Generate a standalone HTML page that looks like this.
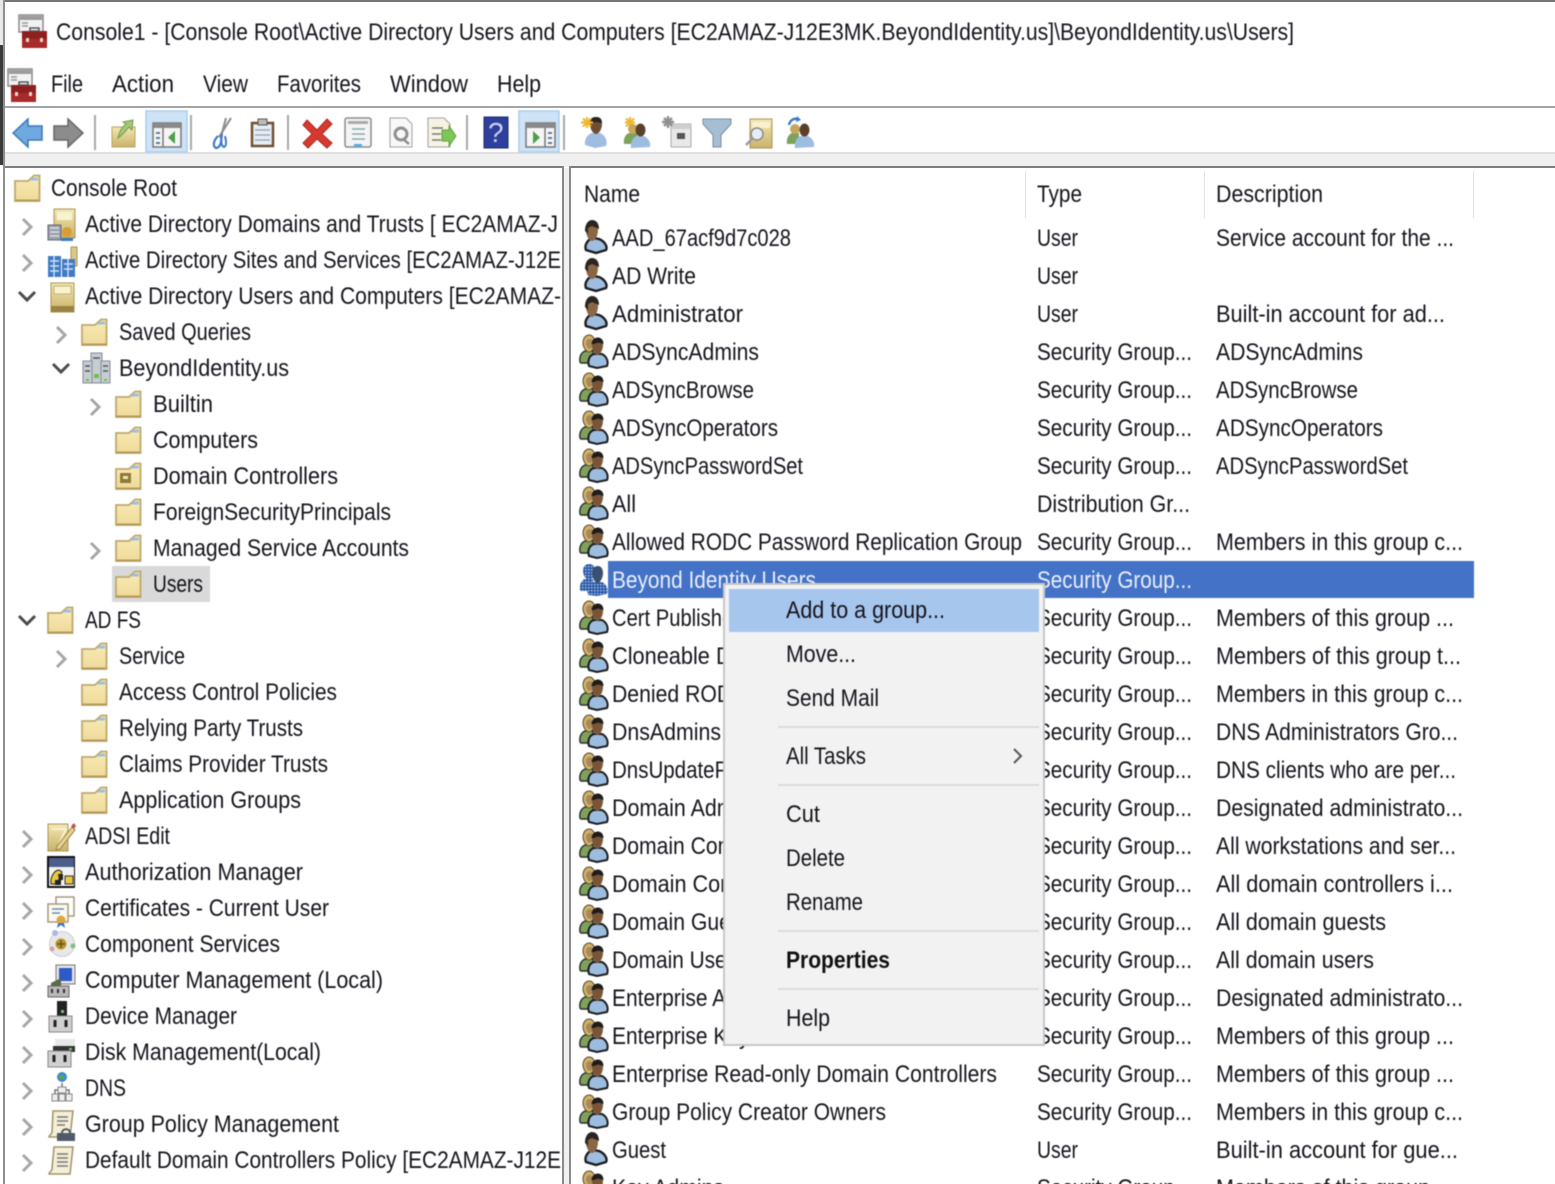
<!DOCTYPE html>
<html><head><meta charset="utf-8"><title>Console1</title>
<style>
html,body{margin:0;padding:0;background:#fff;width:1555px;height:1184px;overflow:hidden}
svg{display:block}
text{font-family:"Liberation Sans",sans-serif;font-size:24px;fill:#16141c}
.b{filter:blur(.45px)}
.w{fill:#e8eefa}
.bd{font-weight:bold;fill:#111}
.ch{fill:none;stroke:#a6a6a6;stroke-width:3}
.cd{fill:none;stroke:#4a4a4a;stroke-width:3}
</style></head><body>
<svg width="1555" height="1184" viewBox="0 0 1555 1184" xmlns="http://www.w3.org/2000/svg">
<defs>
<linearGradient id="fg" x1="0" y1="0" x2="0" y2="1"><stop offset="0" stop-color="#f9ecb8"/><stop offset="1" stop-color="#eed998"/></linearGradient>
<linearGradient id="bk" x1="0" y1="0" x2="0" y2="1"><stop offset="0" stop-color="#f4e8b0"/><stop offset="1" stop-color="#c9b26a"/></linearGradient>
<g id="folder"><path d="M1 7H14L20 1.500H25.500V27H1Z" fill="url(#fg)" stroke="#bfa86c" stroke-width="1.800"/><path d="M18 3.500H24V6.500H16Z" fill="#9fc0dc"/><path d="M1 25.500H26V27.500H1Z" fill="#b59a58"/></g>
<g id="user"><path d="M4 30C2 25 6 19 11 18L17 19C22 21 26 26 24 30L14 33Z" fill="#9ebde0" stroke="#1c1c1c" stroke-width="2.400"/><path d="M4 10C4 4 7 1 10 1C14 1 16 4 16 10C16 16 13 21 10 21C7 21 4 16 4 10Z" fill="#8a6644"/><path d="M3 11C3 3 7 0 10 0C14 0 17 3 17 9L10 6L6 8L6 14Z" fill="#2a2522"/></g>
<g id="group"><path d="M1 27C0 21 3 17 6 16H14V28H2Z" fill="#7ea25c" stroke="#2c2c2c" stroke-width="1.400"/><path d="M4 8C4 3 7 0 10 0C14 0 16 4 16 8C16 12 13 17 10 17C7 17 4 12 4 8Z" fill="#d0b06a" stroke="#5a4a2c"/><path d="M7 8C7 5 9 4 11 4C13 4 14 6 14 9C14 12 12 14 10.500 14C9 14 7 11 7 8Z" fill="#a88a5a"/><path d="M10 31C8 25 11 20 15 19H23C27 21 30 26 28 31L18 33Z" fill="#9cbde0" stroke="#1c1c1c" stroke-width="2"/><path d="M13 10C13 5 16 3 19 3C22 3 24 6 24 10C24 15 21 20 18.500 20C16 20 13 15 13 10Z" fill="#7a5638"/><path d="M12.500 9C13 4 16 2.500 19 2.500C22 2.500 24.500 5 24.500 9L19 7.500L15 9Z" fill="#1f1c1a"/></g>
<pattern id="dots" width="3" height="3" patternUnits="userSpaceOnUse"><rect width="3" height="3" fill="#2c5aa8"/><rect width="1.500" height="1.500" fill="#a6c2e6"/></pattern>
<g id="groupsel"><path d="M1 27C0 21 3 17 6 16H14V28H2Z" fill="url(#dots)"/><path d="M4 8C4 3 7 1 10 1C14 1 16 4 16 8C16 12 13 17 10 17C7 17 4 12 4 8Z" fill="url(#dots)"/><path d="M9 32C7 25 10 20 14 19H23C27 21 30 26 28 31L18 33Z" fill="url(#dots)"/><path d="M13 10C13 5 16 3 19 3C22 3 24 6 24 10C24 15 21 20 18.500 20C16 20 13 15 13 10Z" fill="#3a4f72"/></g>
<g id="mmc"><path d="M1 1H25V18H1Z" fill="#f3f3f3" stroke="#8a8a8a" stroke-width="1.500"/><path d="M2 2H24V6H2Z" fill="#9c9c9c"/><path d="M4 9H10M4 12H10" stroke="#999" stroke-width="1.500"/><path d="M11 17H29V34H4V20H11Z" fill="#a82a2a"/><path d="M4 17H29V25H4Z" fill="#8f1f1f"/><path d="M12 14H21V17H12Z" fill="none" stroke="#555" stroke-width="1.500"/><path d="M8 24H11V28H8ZM22 24H25V28H22Z" fill="#e8d8c8"/></g>
<g id="gear"><path d="M1 1H24V30H1Z" fill="url(#bk)" stroke="#a7955a"/><path d="M4 4H21V12H4Z" fill="#f8f2cf" stroke="#c4b278"/><path d="M1 24H24V30H1Z" fill="#9a8440"/></g>
</defs>

<rect width="1555" height="1184" fill="#fff"/>
<rect x="4" y="0" width="1551" height="2" fill="#777"/>
<rect x="0" y="45" width="4" height="120" fill="#3a3a3a"/>
<rect x="0" y="0" width="3" height="45" fill="#e8e8e8"/>
<rect x="3" y="0" width="2" height="1184" fill="#8e8e8e"/>
<rect x="5" y="106" width="1550" height="2" fill="#a5a5a5"/>
<rect x="5" y="152" width="1550" height="15" fill="#f0f0f0"/>
<rect x="5" y="152" width="1550" height="2" fill="#e0e0e0"/>
<rect x="5" y="166" width="559" height="2" fill="#7d7d7d"/>
<rect x="569" y="166" width="986" height="2" fill="#7d7d7d"/>
<rect x="562" y="166" width="2" height="1018" fill="#8a8a8a"/>
<rect x="564" y="168" width="5" height="1016" fill="#f0f0f0"/>
<rect x="569" y="166" width="2" height="1018" fill="#8a8a8a"/>
<rect x="1025" y="171" width="1" height="47" fill="#e3e3e3"/>
<rect x="1204" y="171" width="1" height="47" fill="#e3e3e3"/>
<rect x="1473" y="171" width="1" height="47" fill="#e3e3e3"/>

<g class="b">
<!-- title and menu -->
<use href="#mmc" x="18" y="14"/>
<text x="56" y="40" textLength="1238" lengthAdjust="spacingAndGlyphs">Console1 - [Console Root\Active Directory Users and Computers [EC2AMAZ-J12E3MK.BeyondIdentity.us]\BeyondIdentity.us\Users]</text>
<use href="#mmc" x="7" y="68"/>
<text x="51" y="92" textLength="32" lengthAdjust="spacingAndGlyphs">File</text>
<text x="112" y="92" textLength="62" lengthAdjust="spacingAndGlyphs">Action</text>
<text x="203" y="92" textLength="45" lengthAdjust="spacingAndGlyphs">View</text>
<text x="277" y="92" textLength="84" lengthAdjust="spacingAndGlyphs">Favorites</text>
<text x="390" y="92" textLength="78" lengthAdjust="spacingAndGlyphs">Window</text>
<text x="497" y="92" textLength="44" lengthAdjust="spacingAndGlyphs">Help</text>

<!-- toolbar -->
<path d="M13 133L28 119V126H42V140H28V147Z" fill="#6fa9e0" stroke="#3b78b8" stroke-width="1.500"/>
<path d="M83 133L68 119V126H54V140H68V147Z" fill="#8c8c8c" stroke="#666" stroke-width="1.500"/>
<rect x="94" y="115" width="2" height="35" fill="#a8a8a8"/>
<path d="M112 127H135V147H112Z" fill="url(#bk)" stroke="#b7a565"/>
<path d="M118 138C120 130 122 127 126 124L123 122L133 120L132 130L129 127C126 130 124 134 118 138Z" fill="#a8c878" stroke="#6f9a4c"/>
<rect x="146" y="111" width="41" height="41" fill="#cfe3f6" stroke="#a8cdee" stroke-width="1.500"/>
<path d="M153 123H181V147H153Z" fill="#f5f5f5" stroke="#777" stroke-width="1.500"/><rect x="153" y="123" width="28" height="5" fill="#8a8a8a"/><path d="M163 128V147" stroke="#777" stroke-width="1.500"/><path d="M156 133H160M156 138H160M156 143H160" stroke="#5a7ca0" stroke-width="2"/><path d="M175 131V144L168 137.500Z" fill="#4f9e4f"/>
<rect x="190" y="115" width="2" height="35" fill="#a8a8a8"/>
<path d="M231 118L219 137" stroke="#8a8a8a" stroke-width="2"/><path d="M226 118L221 137" stroke="#8a8a8a" stroke-width="2"/>
<path d="M218 136C214 140 212 146 216 148C220 148 222 142 221 136" fill="none" stroke="#3c78c8" stroke-width="2.200"/><path d="M222 134C221 140 221 146 224 147C227 146 226 140 225 136" fill="none" stroke="#3c78c8" stroke-width="2"/>
<path d="M252 123H273V146H252Z" fill="#e9edf4" stroke="#6e5030" stroke-width="2.500"/><path d="M258 119H267V125H258Z" fill="#bbb" stroke="#555"/><path d="M255 130H270M255 135H270M255 140H270" stroke="#9ab" stroke-width="1.500"/>
<rect x="287" y="115" width="2" height="35" fill="#a8a8a8"/>
<path d="M307 120L317 130L327 119L332 124L322 134L332 143L327 148L317 139L308 148L303 143L312 134L303 125Z" fill="#d8392f" stroke="#a82820"/>
<rect x="345" y="118" width="26" height="29" rx="2" fill="#f4f4f4" stroke="#8a8a8a" stroke-width="1.500"/><rect x="348" y="121" width="20" height="3" fill="#aaa"/><path d="M352 129H365M352 134H365M352 139H365" stroke="#8aa" stroke-width="1.500"/><rect x="354" y="144" width="8" height="3" fill="#5aa8e0"/>
<path d="M390 118H406L412 124V147H390Z" fill="#f8f8f8" stroke="#a0a0a0"/><circle cx="401" cy="134" r="6" fill="none" stroke="#909090" stroke-width="3"/><path d="M403 139L409 144" stroke="#909090" stroke-width="2.500"/>
<path d="M428 118H444L450 124V147H428Z" fill="#f6f3e2" stroke="#a0a0a0"/><path d="M432 128H443M432 134H441M432 140H441" stroke="#777" stroke-width="1.500"/><path d="M442 130H449V126L456 136L449 146V141H442Z" fill="#7fc65a" stroke="#5ea03e"/>
<rect x="466" y="115" width="2" height="35" fill="#a8a8a8"/>
<rect x="484" y="117" width="24" height="31" fill="#2e3f9c" stroke="#1c2a70"/>
<text x="488" y="142" style="font-size:28px;fill:#c8d2f0">?</text>
<rect x="519" y="111" width="40" height="41" fill="#cfe3f6" stroke="#a8cdee" stroke-width="1.500"/>
<path d="M526 123H555V147H526Z" fill="#f5f5f5" stroke="#777" stroke-width="1.500"/><rect x="526" y="123" width="29" height="5" fill="#8a8a8a"/><path d="M545 128V147" stroke="#777" stroke-width="1.500"/><path d="M548 133H552M548 138H552M548 143H552" stroke="#5a7ca0" stroke-width="2"/><path d="M533 131V144L540 137.500Z" fill="#4f9e4f"/>
<rect x="563" y="115" width="2" height="35" fill="#a8a8a8"/>
<!-- toolbar right -->
<g transform="translate(580,116)"><path d="M5 29C4 23 8 18 12 17H20C25 19 28 25 26 30L15 32Z" fill="#9ebde0"/><path d="M10 8C10 3 13 1 16 1C20 1 22 4 22 8C22 13 19 18 16 18C13 18 10 13 10 8Z" fill="#6e4e32"/><path d="M10 7C10 2 13 1 16 1C20 1 22 3 22 7L16 6Z" fill="#2a2522"/><path d="M7 1V12M1 6.500H13M3 2.500L11 10.500M11 2.500L3 10.500" stroke="#f0b830" stroke-width="2.200"/></g>
<g transform="translate(621,116)"><path d="M4 6.500H14M9 1V12M5 2.500L13 10.500M13 2.500L5 10.500" stroke="#f0b830" stroke-width="2.200"/><path d="M3 28C2 22 5 18 8 17H16V28Z" fill="#7ea25c"/><circle cx="12" cy="13" r="5" fill="#c6a65e"/><path d="M10 32C9 26 12 21 16 20H23C27 22 30 26 29 31Z" fill="#9cbde0"/><ellipse cx="19.500" cy="14" rx="5" ry="6.500" fill="#5a4028"/></g>
<g transform="translate(662,116)"><path d="M9 8H29V31H9Z" fill="#e9e9e9" stroke="#aaa"/><path d="M9 8H29V13H9Z" fill="#cfcfcf"/><path d="M15 17H23V23H15Z" fill="#555"/><path d="M0 6H12M6 0V12M2 2L10 10M10 2L2 10" stroke="#8f8f8f" stroke-width="2.400"/></g>
<path d="M703 119H731V124L721 135V147H713V135L703 124Z" fill="#a6bed3" stroke="#7a8ea0"/>
<g transform="translate(745,118)"><path d="M5 1H27V30H5Z" fill="url(#bk)" stroke="#a7955a"/><path d="M7 4H25V10H7Z" fill="#f8f2cf"/><circle cx="12" cy="16" r="6" fill="#e4eef8" stroke="#8a8a8a" stroke-width="1.500"/><path d="M8 20L1 27" stroke="#9a9a9a" stroke-width="2.500"/></g>
<g transform="translate(785,116)"><path d="M4 9C5 4 9 2 13 3" fill="none" stroke="#3c78c8" stroke-width="2.400"/><path d="M12 0L16 4L11 6Z" fill="#3c78c8"/><path d="M2 28C1 22 4 18 7 17H14V28Z" fill="#7ea25c"/><circle cx="10" cy="13" r="5" fill="#c6a65e"/><path d="M10 32C9 26 12 21 16 20H23C27 22 30 26 29 31Z" fill="#9cbde0"/><ellipse cx="19.500" cy="14" rx="5" ry="6.500" fill="#5a4028"/></g>

<!-- tree selection -->
<rect x="112" y="566" width="98" height="36" fill="#d9d9d9"/>

<!-- tree chevrons -->
<g class="ch">
<path d="M23 219L31 227L23 235"/><path d="M23 255L31 263L23 271"/>
<path d="M57 327L65 335L57 343"/>
<path d="M91 399L99 407L91 415"/><path d="M91 543L99 551L91 559"/>
<path d="M57 651L65 659L57 667"/>
<path d="M23 831L31 839L23 847"/><path d="M23 867L31 875L23 883"/><path d="M23 903L31 911L23 919"/><path d="M23 939L31 947L23 955"/><path d="M23 975L31 983L23 991"/><path d="M23 1011L31 1019L23 1027"/><path d="M23 1047L31 1055L23 1063"/><path d="M23 1083L31 1091L23 1099"/><path d="M23 1119L31 1127L23 1135"/><path d="M23 1155L31 1163L23 1171"/>
</g>
<g class="cd">
<path d="M19 292L27 300L35 292"/><path d="M53 364L61 372L69 364"/><path d="M19 616L27 624L35 616"/>
</g>

<!-- tree icons -->
<use href="#folder" x="14" y="174"/>
<g transform="translate(47,208)"><path d="M7 1H28V30H7Z" fill="url(#bk)" stroke="#a7955a"/><path d="M10 4H25V12H10Z" fill="#f8f2cf"/><path d="M1 17H14V32H1Z" fill="#9aa0a6" stroke="#667"/><path d="M3 20H12M3 24H12M3 28H12" stroke="#dde" stroke-width="1.500"/><circle cx="20" cy="24" r="5" fill="#d89c34"/><path d="M14 30H26V33H14Z" fill="#3c78c8"/></g>
<g transform="translate(47,246)"><path d="M24 1H30V20H24Z" fill="#d8c88a" stroke="#a7955a"/><rect x="1" y="10" width="13" height="21" fill="#3f7ac4"/><rect x="15" y="13" width="13" height="18" fill="#3f7ac4"/><path d="M3 15H12M3 20H12M3 25H12M17 18H26M17 23H26M7 10V31M21 13V31" stroke="#cfe0f5" stroke-width="1.400"/></g>
<use href="#gear" x="50" y="282"/>
<use href="#folder" x="81" y="318"/>
<g transform="translate(83,352)"><rect x="8" y="1" width="11" height="30" fill="#c6ced2" stroke="#889"/><rect x="0" y="9" width="9" height="22" fill="#c6ced2" stroke="#889"/><rect x="18" y="9" width="9" height="22" fill="#c6ced2" stroke="#889"/><path d="M2 14H7M10 6H17M20 14H25M2 19H7M20 19H25" stroke="#556" stroke-width="1.500"/><path d="M11 22h5v4h-5zM3 27h3v2h-3zM21 27h3v2h-3z" fill="#6cc04a"/></g>
<use href="#folder" x="115" y="390"/>
<use href="#folder" x="115" y="426"/>
<use href="#folder" x="115" y="462"/><rect x="120" y="473" width="11" height="10" fill="#8f7a3a"/><rect x="123" y="476" width="5" height="3" fill="#f3e6b0"/>
<use href="#folder" x="115" y="498"/>
<use href="#folder" x="115" y="534"/>
<use href="#folder" x="115" y="570"/>
<use href="#folder" x="47" y="606"/>
<use href="#folder" x="81" y="642"/>
<use href="#folder" x="81" y="678"/>
<use href="#folder" x="81" y="714"/>
<use href="#folder" x="81" y="750"/>
<use href="#folder" x="81" y="786"/>
<g transform="translate(47,822)"><path d="M1 2H21V29H1Z" fill="url(#bk)" stroke="#a7955a"/><path d="M5 7H19L12 22" fill="none" stroke="#f8f2cf" stroke-width="2"/><path d="M10 24L25 5L28 8L13 27L9 28Z" fill="#e8d090" stroke="#9a8440"/><path d="M24 4L27 1L29 4L27 7Z" fill="#c85050"/></g>
<g transform="translate(47,856)"><rect x="0" y="0" width="28" height="32" fill="#111"/><rect x="2" y="2" width="25" height="9" fill="#4a5f8c"/><rect x="2" y="11" width="25" height="19" fill="#f2f2f2"/><path d="M4 28C3 20 8 14 12 14L15 16L10 28Z" fill="#e8c83c" stroke="#222"/><path d="M11 18H16V24H12ZM8 24H14V29H8Z" fill="#222"/><rect x="18" y="20" width="8" height="8" fill="#e8c83c" stroke="#333"/></g>
<g transform="translate(47,894)"><path d="M9 3H27V22H9Z" fill="#fff" stroke="#a79a7a" stroke-width="1.500"/><path d="M1 10H21V28H1Z" fill="#fbfaf2" stroke="#a79a7a" stroke-width="1.500"/><path d="M5 15H17M5 19H13" stroke="#6e8ab0" stroke-width="1.500"/><circle cx="14" cy="26" r="4.500" fill="#e0a83c"/><path d="M11 29L10 34L14 31L18 34L17 29Z" fill="#3c78c8"/></g>
<g transform="translate(48,930)"><circle cx="14" cy="14" r="12.500" fill="#e8e8e8" stroke="#cfcfcf"/><circle cx="13" cy="14" r="5.500" fill="#b8962e"/><path d="M13 10V18M9 14H17" stroke="#6a5418" stroke-width="1.500"/><circle cx="7" cy="3" r="3" fill="#a8b8e8"/><circle cx="25" cy="16" r="2.500" fill="#7cc07c"/><circle cx="4" cy="19" r="2.500" fill="#d8a0a0"/></g>
<g transform="translate(47,964)"><rect x="9" y="1" width="19" height="19" fill="#e4e4e4" stroke="#777"/><rect x="12" y="4" width="13" height="13" fill="#2c5ac8"/><path d="M1 22H22V33H1Z" fill="#b8b8b8" stroke="#666"/><path d="M5 25V29M11 25V29M17 25V29" stroke="#333" stroke-width="2"/><path d="M4 19L14 14V22H4Z" fill="#5a6a4a"/></g>
<g transform="translate(48,1001)"><rect x="9" y="0" width="10" height="16" fill="#222"/><rect x="13" y="9" width="3" height="3" fill="#6c6"/><path d="M1 15H24V31H1Z" fill="#d0d0d0" stroke="#888"/><path d="M7 19V26M18 19V26" stroke="#222" stroke-width="3"/></g>
<g transform="translate(47,1038)"><path d="M8 1H28V8H8Z" fill="#e8e8e8"/><path d="M6 8H28V14H6Z" fill="#333"/><rect x="22" y="10" width="3" height="2" fill="#6c6"/><path d="M1 13H24V29H1Z" fill="#d0d0d0" stroke="#888"/><path d="M7 17V24M18 17V24" stroke="#222" stroke-width="3"/></g>
<g transform="translate(52,1072)"><circle cx="10" cy="5" r="5" fill="#3c8ad0"/><path d="M7 3H12V7H7Z" fill="#5aa84a"/><path d="M10 11V16M3 22V18H17V22" fill="none" stroke="#777" stroke-width="1.500"/><path d="M6 15H14V21H6Z" fill="#eee" stroke="#888"/><rect x="0" y="22" width="6" height="7" fill="#eee" stroke="#888"/><rect x="7" y="22" width="6" height="7" fill="#eee" stroke="#888"/><rect x="14" y="22" width="6" height="7" fill="#eee" stroke="#888"/></g>
<g transform="translate(47,1110)"><path d="M6 1H26L23 27H2C2 25 5 24 5 22Z" fill="#f5efd8" stroke="#a09468" stroke-width="1.500"/><path d="M10 7H21M10 11H21M10 15H18" stroke="#777" stroke-width="1.500"/><path d="M10 23H28V31H10Z" fill="#505a68"/><path d="M15 23C15 18 23 18 23 23" fill="none" stroke="#505a68" stroke-width="2"/></g>
<g transform="translate(48,1146)"><path d="M6 1H25L22 28H1C1 26 4 25 4 23Z" fill="#f5efd8" stroke="#a09468" stroke-width="1.500"/><path d="M9 8H20M9 12H20M9 16H20M9 20H20" stroke="#777" stroke-width="1.500"/></g>

<!-- tree text -->
<text x="51" y="196" textLength="126" lengthAdjust="spacingAndGlyphs">Console Root</text>
<text x="85" y="232" textLength="473" lengthAdjust="spacingAndGlyphs">Active Directory Domains and Trusts [ EC2AMAZ-J</text>
<svg x="0" y="240" width="561" height="70">
<text x="85" y="28" textLength="476" lengthAdjust="spacingAndGlyphs">Active Directory Sites and Services [EC2AMAZ-J12E</text>
<text x="85" y="64" textLength="476" lengthAdjust="spacingAndGlyphs">Active Directory Users and Computers [EC2AMAZ-</text>
</svg>
<text x="119" y="340" textLength="132" lengthAdjust="spacingAndGlyphs">Saved Queries</text>
<text x="119" y="376" textLength="170" lengthAdjust="spacingAndGlyphs">BeyondIdentity.us</text>
<text x="153" y="412" textLength="60" lengthAdjust="spacingAndGlyphs">Builtin</text>
<text x="153" y="448" textLength="105" lengthAdjust="spacingAndGlyphs">Computers</text>
<text x="153" y="484" textLength="185" lengthAdjust="spacingAndGlyphs">Domain Controllers</text>
<text x="153" y="520" textLength="238" lengthAdjust="spacingAndGlyphs">ForeignSecurityPrincipals</text>
<text x="153" y="556" textLength="256" lengthAdjust="spacingAndGlyphs">Managed Service Accounts</text>
<text x="153" y="592" textLength="50" lengthAdjust="spacingAndGlyphs">Users</text>
<text x="85" y="628" textLength="56" lengthAdjust="spacingAndGlyphs">AD FS</text>
<text x="119" y="664" textLength="66" lengthAdjust="spacingAndGlyphs">Service</text>
<text x="119" y="700" textLength="218" lengthAdjust="spacingAndGlyphs">Access Control Policies</text>
<text x="119" y="736" textLength="184" lengthAdjust="spacingAndGlyphs">Relying Party Trusts</text>
<text x="119" y="772" textLength="209" lengthAdjust="spacingAndGlyphs">Claims Provider Trusts</text>
<text x="119" y="808" textLength="182" lengthAdjust="spacingAndGlyphs">Application Groups</text>
<text x="85" y="844" textLength="85" lengthAdjust="spacingAndGlyphs">ADSI Edit</text>
<text x="85" y="880" textLength="218" lengthAdjust="spacingAndGlyphs">Authorization Manager</text>
<text x="85" y="916" textLength="244" lengthAdjust="spacingAndGlyphs">Certificates - Current User</text>
<text x="85" y="952" textLength="195" lengthAdjust="spacingAndGlyphs">Component Services</text>
<text x="85" y="988" textLength="298" lengthAdjust="spacingAndGlyphs">Computer Management (Local)</text>
<text x="85" y="1024" textLength="152" lengthAdjust="spacingAndGlyphs">Device Manager</text>
<text x="85" y="1060" textLength="236" lengthAdjust="spacingAndGlyphs">Disk Management(Local)</text>
<text x="85" y="1096" textLength="41" lengthAdjust="spacingAndGlyphs">DNS</text>
<text x="85" y="1132" textLength="254" lengthAdjust="spacingAndGlyphs">Group Policy Management</text>
<svg x="0" y="1140" width="561" height="40"><text x="85" y="28" textLength="476" lengthAdjust="spacingAndGlyphs">Default Domain Controllers Policy [EC2AMAZ-J12E</text></svg>

<!-- list header -->
<text x="584" y="202" textLength="56" lengthAdjust="spacingAndGlyphs">Name</text>
<text x="1037" y="202" textLength="45" lengthAdjust="spacingAndGlyphs">Type</text>
<text x="1216" y="202" textLength="107" lengthAdjust="spacingAndGlyphs">Description</text>

<!-- selection -->
<rect x="608" y="561" width="866" height="37" fill="#4472c6"/>

<!-- list icons -->
<use href="#user" x="582" y="220"/><use href="#user" x="582" y="258"/><use href="#user" x="582" y="296"/>
<use href="#group" x="579" y="335"/><use href="#group" x="579" y="373"/><use href="#group" x="579" y="411"/><use href="#group" x="579" y="449"/><use href="#group" x="579" y="487"/><use href="#group" x="579" y="525"/>
<use href="#groupsel" x="579" y="563"/>
<use href="#group" x="579" y="601"/><use href="#group" x="579" y="639"/><use href="#group" x="579" y="677"/><use href="#group" x="579" y="715"/><use href="#group" x="579" y="753"/><use href="#group" x="579" y="791"/><use href="#group" x="579" y="829"/><use href="#group" x="579" y="867"/><use href="#group" x="579" y="905"/><use href="#group" x="579" y="943"/><use href="#group" x="579" y="981"/><use href="#group" x="579" y="1019"/><use href="#group" x="579" y="1057"/><use href="#group" x="579" y="1095"/>
<use href="#user" x="582" y="1132"/><use href="#group" x="579" y="1171"/>

<!-- names -->
<text x="612" y="246" textLength="179" lengthAdjust="spacingAndGlyphs">AAD_67acf9d7c028</text>
<text x="612" y="284" textLength="84" lengthAdjust="spacingAndGlyphs">AD Write</text>
<text x="612" y="322" textLength="131" lengthAdjust="spacingAndGlyphs">Administrator</text>
<text x="612" y="360" textLength="147" lengthAdjust="spacingAndGlyphs">ADSyncAdmins</text>
<text x="612" y="398" textLength="142" lengthAdjust="spacingAndGlyphs">ADSyncBrowse</text>
<text x="612" y="436" textLength="166" lengthAdjust="spacingAndGlyphs">ADSyncOperators</text>
<text x="612" y="474" textLength="191" lengthAdjust="spacingAndGlyphs">ADSyncPasswordSet</text>
<text x="612" y="512" textLength="24" lengthAdjust="spacingAndGlyphs">All</text>
<text x="612" y="550" textLength="410" lengthAdjust="spacingAndGlyphs">Allowed RODC Password Replication Group</text>
<text class="w" x="612" y="588" textLength="204" lengthAdjust="spacingAndGlyphs">Beyond Identity Users</text>
<text x="612" y="626" textLength="138" lengthAdjust="spacingAndGlyphs">Cert Publishers</text>
<text x="612" y="664" textLength="290" lengthAdjust="spacingAndGlyphs">Cloneable Domain Controllers</text>
<text x="612" y="702" textLength="410" lengthAdjust="spacingAndGlyphs">Denied RODC Password Replication Group</text>
<text x="612" y="740" textLength="109" lengthAdjust="spacingAndGlyphs">DnsAdmins</text>
<text x="612" y="778" textLength="155" lengthAdjust="spacingAndGlyphs">DnsUpdateProxy</text>
<text x="612" y="816" textLength="150" lengthAdjust="spacingAndGlyphs">Domain Admins</text>
<text x="612" y="854" textLength="182" lengthAdjust="spacingAndGlyphs">Domain Computers</text>
<text x="612" y="892" textLength="185" lengthAdjust="spacingAndGlyphs">Domain Controllers</text>
<text x="612" y="930" textLength="146" lengthAdjust="spacingAndGlyphs">Domain Guests</text>
<text x="612" y="968" textLength="132" lengthAdjust="spacingAndGlyphs">Domain Users</text>
<text x="612" y="1006" textLength="170" lengthAdjust="spacingAndGlyphs">Enterprise Admins</text>
<text x="612" y="1044" textLength="212" lengthAdjust="spacingAndGlyphs">Enterprise Key Admins</text>
<text x="612" y="1082" textLength="385" lengthAdjust="spacingAndGlyphs">Enterprise Read-only Domain Controllers</text>
<text x="612" y="1120" textLength="274" lengthAdjust="spacingAndGlyphs">Group Policy Creator Owners</text>
<text x="612" y="1158" textLength="54" lengthAdjust="spacingAndGlyphs">Guest</text>
<text x="612" y="1196" textLength="112" lengthAdjust="spacingAndGlyphs">Key Admins</text>

<!-- types -->
<text x="1037" y="246" textLength="41" lengthAdjust="spacingAndGlyphs">User</text>
<text x="1037" y="284" textLength="41" lengthAdjust="spacingAndGlyphs">User</text>
<text x="1037" y="322" textLength="41" lengthAdjust="spacingAndGlyphs">User</text>
<text x="1037" y="360" textLength="155" lengthAdjust="spacingAndGlyphs">Security Group...</text>
<text x="1037" y="398" textLength="155" lengthAdjust="spacingAndGlyphs">Security Group...</text>
<text x="1037" y="436" textLength="155" lengthAdjust="spacingAndGlyphs">Security Group...</text>
<text x="1037" y="474" textLength="155" lengthAdjust="spacingAndGlyphs">Security Group...</text>
<text x="1037" y="512" textLength="153" lengthAdjust="spacingAndGlyphs">Distribution Gr...</text>
<text x="1037" y="550" textLength="155" lengthAdjust="spacingAndGlyphs">Security Group...</text>
<text class="w" x="1037" y="588" textLength="155" lengthAdjust="spacingAndGlyphs">Security Group...</text>
<text x="1037" y="626" textLength="155" lengthAdjust="spacingAndGlyphs">Security Group...</text>
<text x="1037" y="664" textLength="155" lengthAdjust="spacingAndGlyphs">Security Group...</text>
<text x="1037" y="702" textLength="155" lengthAdjust="spacingAndGlyphs">Security Group...</text>
<text x="1037" y="740" textLength="155" lengthAdjust="spacingAndGlyphs">Security Group...</text>
<text x="1037" y="778" textLength="155" lengthAdjust="spacingAndGlyphs">Security Group...</text>
<text x="1037" y="816" textLength="155" lengthAdjust="spacingAndGlyphs">Security Group...</text>
<text x="1037" y="854" textLength="155" lengthAdjust="spacingAndGlyphs">Security Group...</text>
<text x="1037" y="892" textLength="155" lengthAdjust="spacingAndGlyphs">Security Group...</text>
<text x="1037" y="930" textLength="155" lengthAdjust="spacingAndGlyphs">Security Group...</text>
<text x="1037" y="968" textLength="155" lengthAdjust="spacingAndGlyphs">Security Group...</text>
<text x="1037" y="1006" textLength="155" lengthAdjust="spacingAndGlyphs">Security Group...</text>
<text x="1037" y="1044" textLength="155" lengthAdjust="spacingAndGlyphs">Security Group...</text>
<text x="1037" y="1082" textLength="155" lengthAdjust="spacingAndGlyphs">Security Group...</text>
<text x="1037" y="1120" textLength="155" lengthAdjust="spacingAndGlyphs">Security Group...</text>
<text x="1037" y="1158" textLength="41" lengthAdjust="spacingAndGlyphs">User</text>
<text x="1037" y="1196" textLength="155" lengthAdjust="spacingAndGlyphs">Security Group...</text>

<!-- descriptions -->
<text x="1216" y="246" textLength="238" lengthAdjust="spacingAndGlyphs">Service account for the ...</text>
<text x="1216" y="322" textLength="229" lengthAdjust="spacingAndGlyphs">Built-in account for ad...</text>
<text x="1216" y="360" textLength="147" lengthAdjust="spacingAndGlyphs">ADSyncAdmins</text>
<text x="1216" y="398" textLength="142" lengthAdjust="spacingAndGlyphs">ADSyncBrowse</text>
<text x="1216" y="436" textLength="167" lengthAdjust="spacingAndGlyphs">ADSyncOperators</text>
<text x="1216" y="474" textLength="192" lengthAdjust="spacingAndGlyphs">ADSyncPasswordSet</text>
<text x="1216" y="550" textLength="247" lengthAdjust="spacingAndGlyphs">Members in this group c...</text>
<text x="1216" y="626" textLength="238" lengthAdjust="spacingAndGlyphs">Members of this group ...</text>
<text x="1216" y="664" textLength="245" lengthAdjust="spacingAndGlyphs">Members of this group t...</text>
<text x="1216" y="702" textLength="247" lengthAdjust="spacingAndGlyphs">Members in this group c...</text>
<text x="1216" y="740" textLength="242" lengthAdjust="spacingAndGlyphs">DNS Administrators Gro...</text>
<text x="1216" y="778" textLength="240" lengthAdjust="spacingAndGlyphs">DNS clients who are per...</text>
<text x="1216" y="816" textLength="247" lengthAdjust="spacingAndGlyphs">Designated administrato...</text>
<text x="1216" y="854" textLength="240" lengthAdjust="spacingAndGlyphs">All workstations and ser...</text>
<text x="1216" y="892" textLength="237" lengthAdjust="spacingAndGlyphs">All domain controllers i...</text>
<text x="1216" y="930" textLength="170" lengthAdjust="spacingAndGlyphs">All domain guests</text>
<text x="1216" y="968" textLength="158" lengthAdjust="spacingAndGlyphs">All domain users</text>
<text x="1216" y="1006" textLength="247" lengthAdjust="spacingAndGlyphs">Designated administrato...</text>
<text x="1216" y="1044" textLength="238" lengthAdjust="spacingAndGlyphs">Members of this group ...</text>
<text x="1216" y="1082" textLength="238" lengthAdjust="spacingAndGlyphs">Members of this group ...</text>
<text x="1216" y="1120" textLength="247" lengthAdjust="spacingAndGlyphs">Members in this group c...</text>
<text x="1216" y="1158" textLength="242" lengthAdjust="spacingAndGlyphs">Built-in account for gue...</text>
<text x="1216" y="1196" textLength="238" lengthAdjust="spacingAndGlyphs">Members of this group ...</text>

<!-- context menu -->
<rect x="724" y="584" width="320" height="461" fill="#f2f2f2" stroke="#c8c8c8" stroke-width="2"/>
<rect x="729" y="589" width="310" height="43" fill="#a6c6ee"/>
<rect x="778" y="726" width="261" height="2" fill="#dcdcdc"/>
<rect x="778" y="784" width="261" height="2" fill="#dcdcdc"/>
<rect x="778" y="930" width="261" height="2" fill="#dcdcdc"/>
<rect x="778" y="988" width="261" height="2" fill="#dcdcdc"/>
<text x="786" y="618" textLength="159" lengthAdjust="spacingAndGlyphs">Add to a group...</text>
<text x="786" y="662" textLength="70" lengthAdjust="spacingAndGlyphs">Move...</text>
<text x="786" y="706" textLength="93" lengthAdjust="spacingAndGlyphs">Send Mail</text>
<text x="786" y="764" textLength="80" lengthAdjust="spacingAndGlyphs">All Tasks</text>
<path d="M1014 749L1021 756L1014 763" fill="none" stroke="#555" stroke-width="2"/>
<text x="786" y="822" textLength="34" lengthAdjust="spacingAndGlyphs">Cut</text>
<text x="786" y="866" textLength="59" lengthAdjust="spacingAndGlyphs">Delete</text>
<text x="786" y="910" textLength="77" lengthAdjust="spacingAndGlyphs">Rename</text>
<text class="bd" x="786" y="968" textLength="104" lengthAdjust="spacingAndGlyphs">Properties</text>
<text x="786" y="1026" textLength="44" lengthAdjust="spacingAndGlyphs">Help</text>
</g>
</svg>
</body></html>
